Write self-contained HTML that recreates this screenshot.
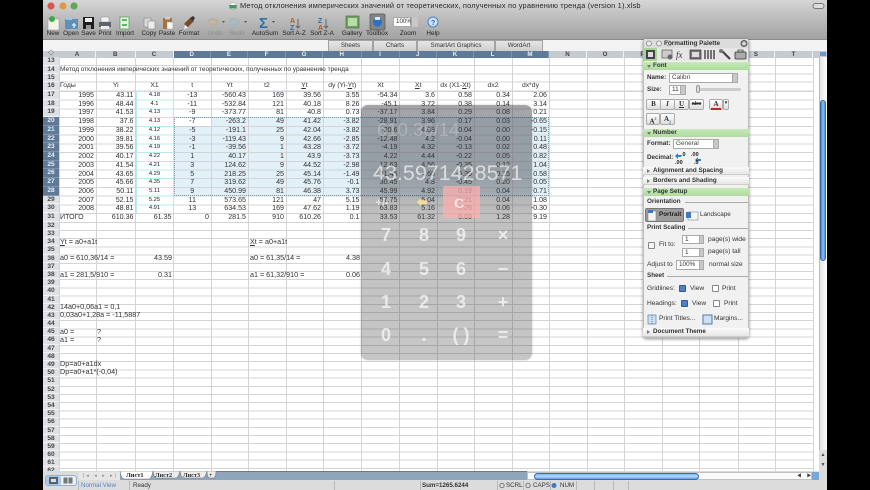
<!DOCTYPE html>
<html><head><meta charset="utf-8"><title>Excel</title>
<style>
*{box-sizing:border-box;margin:0;padding:0}
html,body{width:870px;height:490px;background:#000;overflow:hidden}
body{font-family:"Liberation Sans","Noto Sans CJK JP",sans-serif;color:#333;position:relative}
#w{position:absolute;left:43px;top:0;width:784px;height:490px;background:#fff;overflow:hidden;filter:blur(.35px)}
#p{position:absolute;left:-43px;top:0;width:870px;height:490px}
.t{position:absolute;white-space:nowrap;line-height:8px;font-size:6.6px}
.c{transform:translateX(-50%)}
.lb{font-size:6.4px;color:#222;top:30px}
.r{position:absolute;left:59px;display:grid;grid-template-columns:37px 39.5px 38px 37.5px 37px 38px 37px 38.5px 38px 37.5px 37px 38px 37px;font-size:7.1px;color:#333;line-height:8.7px;height:8.7px;white-space:nowrap}
.r i{font-style:normal;text-align:right;padding-right:2px}
.r i:nth-child(3){font-size:5.8px;text-align:center;padding:0;color:#222}
.r i:nth-child(4){text-align:center;padding:0}
.r.n i:nth-child(3){font-size:7.1px;text-align:right;padding-right:2px;color:#333}
.r.n i:nth-child(4){text-align:right;padding-right:2px}
.r.h{font-size:6.8px}
.r.h i,.r.h i:nth-child(3),.r.h i:nth-child(4){text-align:center;padding:0;font-size:6.8px}
.r.h i.l,.r i.l{text-align:left;padding-left:1px}
.ch{position:absolute;left:59px;top:50.5px;height:7px;display:grid;grid-template-columns:37px 39.5px 38px 37.5px 37px 38px 37px 38.5px 38px 37.5px 37px 38px 37px 38px 37px 38px 37px 39px 37px 38px;font-size:6.2px;line-height:7px;font-weight:bold;text-align:center}
.ch i{font-style:normal;background:#c6cbd2;color:#444;border-right:1px solid #eef0f2}
.ch i.s{background:#5e7a96;color:#e8eef4;border-right:1px solid #7c94ac}
.rh{position:absolute;left:43px;width:16px;background:#dde0e4;font-size:6.6px;text-align:center;color:#444;font-weight:bold}
.rh div{border-bottom:1px solid #f0f1f3}
.rh .s{background:#5e7a96;color:#e8eef4;border-bottom:1px solid #7c94ac}
.g{font-size:7.2px;color:#333}
.pal{position:absolute;left:643px;top:39px;width:106px;height:299px;background:#f1f1f1;border:1px solid #bcbcbc;border-radius:3px;box-shadow:0 1px 3px rgba(0,0,0,.45)}
.hd{position:absolute;left:643px;width:106px;height:8px;background:linear-gradient(#c6e9b8,#aedb9c);font-size:6.3px;font-weight:bold;line-height:8px;padding-left:10px;color:#333}
.hd.w{background:linear-gradient(#fafafa,#e6e6e6);border-bottom:1px solid #ccc}
.hd:before{content:"";position:absolute;left:4px;top:2.5px;border-left:2.5px solid transparent;border-right:2.5px solid transparent;border-top:3.5px solid #777}
.hd.w:before{border-top:2.5px solid transparent;border-bottom:2.5px solid transparent;border-left:3.5px solid #777;border-right:0;top:2px}
.f{position:absolute;background:#fff;border:1px solid #aaa;font-size:6.4px;line-height:8px;padding-left:2px;color:#333}
.btn{position:absolute;background:linear-gradient(#fff,#ddd);border:1px solid #aaa;border-radius:2px;font-size:7px;text-align:center;color:#333;font-family:"Liberation Serif",serif;font-weight:bold}
.ar{position:absolute;background:#c8c8c8;border-left:1px solid #aaa}
.sl{position:absolute;height:1px;background:#aaa}
.b6{font-weight:bold;font-size:6.3px}
.cb{position:absolute;width:7px;height:7px;background:#fff;border:1px solid #888;border-radius:1px}
.cb.on{background:#4d82c8;border-color:#35598c}
.calc{position:absolute;left:361px;top:105px;width:171px;height:255px;border-radius:7px;background:linear-gradient(rgba(52,54,60,.45) 0,rgba(52,54,60,.43) 70px,rgba(60,60,60,.32) 112px,rgba(60,60,60,.29) 100%);box-shadow:0 0 2px rgba(0,0,0,.2)}
.k{position:absolute;font-size:18px;line-height:18px;color:rgba(255,255,255,.66);transform:translateX(-50%);font-weight:bold;white-space:nowrap}
.tab{position:absolute;top:39.5px;height:11px;background:linear-gradient(#e6e6e6,#cecece);border:1px solid #a2a2a2;border-bottom:0;font-size:6.2px;text-align:center;line-height:10px;color:#333}
.d{position:absolute;top:481px;width:1px;height:9px;background:#b8b8b8}
.st{position:absolute;top:481px;font-size:6.2px;line-height:9px;color:#333;white-space:nowrap}
.q div{height:8.2px}
</style></head><body>
<div id="w"><div id="p">
<!-- toolbar -->
<div style="position:absolute;left:43px;top:0;width:784px;height:39px;background:linear-gradient(#d6d6d6,#c2c2c2 35%,#a2a2a2)"></div>
<div style="position:absolute;left:43px;top:39px;width:784px;height:12px;background:#f3f3f3;border-top:1px solid #8a8a8a"></div>
<svg style="position:absolute;left:0;top:0" width="870" height="40">
<circle cx="51" cy="6" r="3.6" fill="#d9564e"/><circle cx="63" cy="6" r="3.6" fill="#dd9a45"/><circle cx="74" cy="6" r="3.6" fill="#63a65c"/>
<circle cx="233" cy="6" r="3.6" fill="#f4f4f4" stroke="#999" stroke-width=".5"/><rect x="229.5" y="5" width="7" height="3.5" fill="#3f9a5a"/>
<rect x="813" y="3.5" width="11" height="5" rx="2.5" fill="#ddd" stroke="#777"/>
<rect x="48" y="19" width="11" height="11" fill="#f4f4ea" stroke="#999" stroke-width=".6"/><circle cx="52" cy="19" r="3" fill="#3fa84a"/>
<rect x="65" y="19" width="13" height="10" fill="#5f8fb8"/><rect x="66" y="17" width="6" height="3" fill="#a9c3d8"/><path d="M72 25h4M74 23v5" stroke="#fff"/>
<rect x="83" y="17" width="11" height="12" fill="#1e1e1e"/><rect x="85" y="18" width="7" height="4" fill="#eee"/><rect x="86" y="25" width="5" height="4" fill="#999"/>
<rect x="101" y="17" width="8" height="5" fill="#f2f2f2" stroke="#888" stroke-width=".5"/><rect x="99" y="22" width="12" height="5" fill="#5c6670"/><rect x="101" y="26" width="8" height="3" fill="#eee"/>
<rect x="120" y="17" width="9" height="12" fill="#e8f2e4" stroke="#4aa04e" stroke-width=".7"/><path d="M122 20h5M122 25h5" stroke="#35a03f" stroke-width="1.5"/>
<rect x="144" y="18" width="7" height="9" fill="#d8d8d8" stroke="#888" stroke-width=".6"/><rect x="148" y="21" width="7" height="8" fill="#ececec" stroke="#888" stroke-width=".6"/>
<rect x="163" y="18" width="9" height="11" fill="#a8703e"/><rect x="165" y="16.5" width="5" height="3" fill="#ccc"/><rect x="167" y="22" width="6" height="7" fill="#f4f4f4" stroke="#999" stroke-width=".5"/>
<path d="M184 24l6-6 4 3-6 6z" fill="#7b4a20"/><path d="M185 25l3 3-4 1z" fill="#f0f0f0"/><path d="M190 18l3-2 2 2-2 3z" fill="#333"/>
<path d="M208 22c2-4 8-4 10 0-2 4-7 4-9 2" fill="none" stroke="#c0ae90" stroke-width="2"/><path d="M229 22c2-4 8-4 10 0-2 4-7 4-9 2" fill="none" stroke="#9fb6c4" stroke-width="2"/>
<path d="M222 21l3 0-1.5 2zM244 21l3 0-1.5 2zM272 21l3 0-1.5 2z" fill="#555"/>
<text x="259" y="28" font-size="15" font-weight="bold" fill="#2f6fb0" font-family="Liberation Sans">Σ</text>
<text x="290" y="23" font-size="7" font-weight="bold" fill="#b25a20" font-family="Liberation Sans">A</text><text x="290" y="30" font-size="7" font-weight="bold" fill="#2f6fb0" font-family="Liberation Sans">Z</text><path d="M298 19v9M296 26l2 2 2-2" stroke="#666" fill="none"/>
<text x="318" y="23" font-size="7" font-weight="bold" fill="#2f6fb0" font-family="Liberation Sans">Z</text><text x="318" y="30" font-size="7" font-weight="bold" fill="#b25a20" font-family="Liberation Sans">A</text><path d="M326 19v9M324 26l2 2 2-2" stroke="#666" fill="none"/>
<rect x="346" y="16" width="13" height="12" fill="#6fa060" stroke="#4d6d44" stroke-width=".7"/><rect x="348" y="18" width="9" height="8" fill="#b8dca8"/>
<rect x="370" y="14" width="15" height="16" rx="1.5" fill="#808488" stroke="#555" stroke-width=".7"/><circle cx="377.5" cy="22" r="4.5" fill="#2f6fc0"/><rect x="375" y="17" width="5" height="3" fill="#d8e8f4"/>
<circle cx="433" cy="22" r="5" fill="#cfe0f2" stroke="#4d84c0"/><text x="431" y="25" font-size="7" font-weight="bold" fill="#2f6fb0" font-family="Liberation Sans">?</text>
</svg>
<div class="t" style="left:240px;top:2px;font-size:7.4px;color:#2a2a2a;letter-spacing:.18px">Метод отклонения имперических значений от теоретических, полученных по уравнению тренда (version 1).xlsb</div>
<div class="t c lb" style="left:53px">New</div><div class="t c lb" style="left:71px">Open</div><div class="t c lb" style="left:88.5px">Save</div><div class="t c lb" style="left:105px">Print</div><div class="t c lb" style="left:125px">Import</div><div class="t c lb" style="left:149px">Copy</div><div class="t c lb" style="left:167px">Paste</div><div class="t c lb" style="left:189px">Format</div><div class="t c lb" style="left:215px;color:#8a8a8a">Undo</div><div class="t c lb" style="left:237px;color:#8a8a8a">Redo</div><div class="t c lb" style="left:265px">AutoSum</div><div class="t c lb" style="left:294px">Sort A-Z</div><div class="t c lb" style="left:322px">Sort Z-A</div><div class="t c lb" style="left:352px">Gallery</div><div class="t c lb" style="left:377px">Toolbox</div><div class="t c lb" style="left:408px">Zoom</div><div class="t c lb" style="left:433px">Help</div>
<div class="f" style="left:393px;top:17px;width:18px;height:10px;font-size:6.2px">100%</div><div class="ar" style="left:411px;top:17px;width:7px;height:10px"></div>
<div class="tab" style="left:328px;width:45px">Sheets</div><div class="tab" style="left:373px;width:44px">Charts</div><div class="tab" style="left:417px;width:78px">SmartArt Graphics</div><div class="tab" style="left:495px;width:48px">WordArt</div>

<!-- sheet -->
<div style="position:absolute;left:173.5px;top:117.2px;width:375.5px;height:78.4px;background:#e2f0f8"></div>
<div style="position:absolute;left:173.5px;top:117.2px;width:37.5px;height:8.7px;background:#fff"></div>
<div style="position:absolute;left:59px;top:57px;width:754px;height:34px;background:linear-gradient(transparent 8px,#d3d4d8 8px,#d3d4d8 9px,transparent 9px,transparent 16.5px,#d3d4d8 16.5px,#d3d4d8 17.5px,transparent 17.5px,transparent 24.5px,#d3d4d8 24.5px,#d3d4d8 25.5px,transparent 25.5px,transparent 33.5px,#d3d4d8 33.5px)"></div>
<div style="position:absolute;left:59px;top:91px;width:754px;height:139px;background:repeating-linear-gradient(#d3d4d8 0,#d3d4d8 1px,transparent 1px,transparent 8.72px)"></div>
<div style="position:absolute;left:59px;top:230px;width:754px;height:241px;background:repeating-linear-gradient(#d3d4d8 0,#d3d4d8 1px,transparent 1px,transparent 8.2px)"></div>
<svg style="position:absolute;left:0;top:0" width="870" height="490"><path d="M59.5 57V471M96.5 57V471M135.5 57V471M173.5 57V471M211.5 57V471M248.5 57V471M286.5 57V471M323.5 57V471M361.5 57V471M399.5 57V471M437.5 57V471M474.5 57V471M512.5 57V471M549.5 57V471M587.5 57V471M624.5 57V471M662.5 57V471M699.5 57V471M738.5 57V471M775.5 57V471M813.5 57V471" stroke="#d3d4d8" stroke-width="1" fill="none"/></svg>
<div style="position:absolute;left:135.5px;top:91px;width:38px;height:122px;border-left:1px solid #b6ecf0;border-right:1px solid #b6ecf0;background:repeating-linear-gradient(#b6ecf0 0,#b6ecf0 1px,transparent 1px,transparent 8.72px)"></div>
<div style="position:absolute;left:173.5px;top:117.2px;width:375.5px;height:78.4px;border:1px dotted #7d9cb2"></div>

<div class="ch"><i>A</i><i>B</i><i>C</i><i class="s">D</i><i class="s">E</i><i class="s">F</i><i class="s">G</i><i class="s">H</i><i class="s">I</i><i class="s">J</i><i class="s">K</i><i class="s">L</i><i class="s">M</i><i>N</i><i>O</i><i>P</i><i>Q</i><i>R</i><i>S</i><i>T</i></div>
<div style="position:absolute;left:43px;top:50.5px;width:16px;height:7px;background:#c6cbd2;text-align:center;font-size:6px;line-height:7px">◇</div>
<div style="position:absolute;left:813px;top:50.5px;width:14px;height:7px;background:#c6cbd2"></div>

<div class="rh" style="top:57px;line-height:8.5px;height:34px"><div style="height:8.5px">13</div><div style="height:8.5px">14</div><div style="height:8px">15</div><div style="height:9px">16</div></div>
<div class="rh" style="top:91px;line-height:8.72px"><div style="height:8.72px">17</div><div style="height:8.72px">18</div><div style="height:8.72px">19</div><div class="s" style="height:8.72px">20</div><div class="s" style="height:8.72px">21</div><div class="s" style="height:8.72px">22</div><div class="s" style="height:8.72px">23</div><div class="s" style="height:8.72px">24</div><div class="s" style="height:8.72px">25</div><div class="s" style="height:8.72px">26</div><div class="s" style="height:8.72px">27</div><div class="s" style="height:8.72px">28</div><div style="height:8.72px">29</div><div style="height:8.72px">30</div><div style="height:8.72px">31</div><div style="height:8.3px">32</div></div>
<div class="rh q" style="top:230px;height:241px;overflow:hidden;line-height:8.2px"><div>33</div><div>34</div><div>35</div><div>36</div><div>37</div><div>38</div><div>39</div><div>40</div><div>41</div><div>42</div><div>43</div><div>44</div><div>45</div><div>46</div><div>47</div><div>48</div><div>49</div><div>50</div><div>51</div><div>52</div><div>53</div><div>54</div><div>55</div><div>56</div><div>57</div><div>58</div><div>59</div><div>60</div><div>61</div><div>62</div></div>

<div class="t" style="left:60px;top:66px;font-size:6.47px;color:#333">Метод отклонения имперических значений от теоретических, полученных по уравнению тренда</div>
<div class="r n h" style="top:82px"><i class="l">Годы</i><i>Yi</i><i>X1</i><i>t</i><i>Yt</i><i>t2</i><i><u>Y</u>t</i><i>dy (Yi-<u>Y</u>t)</i><i>Xt</i><i><u>X</u>t</i><i>dx (X1-<u>X</u>t)</i><i>dx2</i><i>dx*dy</i></div>
<div class="r" style="top:91px"><i>1995</i><i>43.11</i><i>4.18</i><i>-13</i><i>-560.43</i><i>169</i><i>39.56</i><i>3.55</i><i>-54.34</i><i>3.6</i><i>0.58</i><i>0.34</i><i>2.06</i></div>
<div class="r" style="top:99.7px"><i>1996</i><i>48.44</i><i>4.1</i><i>-11</i><i>-532.84</i><i>121</i><i>40.18</i><i>8.26</i><i>-45.1</i><i>3.72</i><i>0.38</i><i>0.14</i><i>3.14</i></div>
<div class="r" style="top:108.4px"><i>1997</i><i>41.53</i><i>4.13</i><i>-9</i><i>-373.77</i><i>81</i><i>40.8</i><i>0.73</i><i>-37.17</i><i>3.84</i><i>0.29</i><i>0.08</i><i>0.21</i></div>
<div class="r" style="top:117.2px"><i>1998</i><i>37.6</i><i>4.13</i><i>-7</i><i>-263.2</i><i>49</i><i>41.42</i><i>-3.82</i><i>-28.91</i><i>3.96</i><i>0.17</i><i>0.03</i><i>-0.65</i></div>
<div class="r" style="top:125.9px"><i>1999</i><i>38.22</i><i>4.12</i><i>-5</i><i>-191.1</i><i>25</i><i>42.04</i><i>-3.82</i><i>-20.6</i><i>4.08</i><i>0.04</i><i>0.00</i><i>-0.15</i></div>
<div class="r" style="top:134.6px"><i>2000</i><i>39.81</i><i>4.16</i><i>-3</i><i>-119.43</i><i>9</i><i>42.66</i><i>-2.85</i><i>-12.48</i><i>4.2</i><i>-0.04</i><i>0.00</i><i>0.11</i></div>
<div class="r" style="top:143.3px"><i>2001</i><i>39.56</i><i>4.19</i><i>-1</i><i>-39.56</i><i>1</i><i>43.28</i><i>-3.72</i><i>-4.19</i><i>4.32</i><i>-0.13</i><i>0.02</i><i>0.48</i></div>
<div class="r" style="top:152px"><i>2002</i><i>40.17</i><i>4.22</i><i>1</i><i>40.17</i><i>1</i><i>43.9</i><i>-3.73</i><i>4.22</i><i>4.44</i><i>-0.22</i><i>0.05</i><i>0.82</i></div>
<div class="r" style="top:160.8px"><i>2003</i><i>41.54</i><i>4.21</i><i>3</i><i>124.62</i><i>9</i><i>44.52</i><i>-2.98</i><i>12.63</i><i>4.56</i><i>-0.35</i><i>0.12</i><i>1.04</i></div>
<div class="r" style="top:169.5px"><i>2004</i><i>43.65</i><i>4.29</i><i>5</i><i>218.25</i><i>25</i><i>45.14</i><i>-1.49</i><i>21.45</i><i>4.68</i><i>-0.39</i><i>0.15</i><i>0.58</i></div>
<div class="r" style="top:178.2px"><i>2005</i><i>45.66</i><i>4.35</i><i>7</i><i>319.62</i><i>49</i><i>45.76</i><i>-0.1</i><i>30.45</i><i>4.8</i><i>-0.45</i><i>0.20</i><i>0.05</i></div>
<div class="r" style="top:186.9px"><i>2006</i><i>50.11</i><i>5.11</i><i>9</i><i>450.99</i><i>81</i><i>46.38</i><i>3.73</i><i>45.99</i><i>4.92</i><i>0.19</i><i>0.04</i><i>0.71</i></div>
<div class="r" style="top:195.6px"><i>2007</i><i>52.15</i><i>5.25</i><i>11</i><i>573.65</i><i>121</i><i>47</i><i>5.15</i><i>57.75</i><i>5.04</i><i>0.21</i><i>0.04</i><i>1.08</i></div>
<div class="r" style="top:204.4px"><i>2008</i><i>48.81</i><i>4.91</i><i>13</i><i>634.53</i><i>169</i><i>47.62</i><i>1.19</i><i>63.83</i><i>5.16</i><i>-0.25</i><i>0.06</i><i>-0.30</i></div>
<div class="r n" style="top:213.1px"><i class="l">ИТОГО</i><i>610.36</i><i>61.35</i><i>0</i><i>281.5</i><i>910</i><i>610.26</i><i>0.1</i><i>33.53</i><i>61.32</i><i>0.03</i><i>1.28</i><i>9.19</i></div>

<div class="t g" style="left:60px;top:238px"><u>Y</u>t = a0+a1t</div><div class="t g" style="left:250px;top:238px"><u>X</u>t = a0+a1t</div>
<div class="t g" style="left:60px;top:254px">a0 = 610,36/14 =</div><div class="t g" style="right:698px;top:254px">43.59</div><div class="t g" style="left:250px;top:254px">a0 = 61,35/14 =</div><div class="t g" style="right:510px;top:254px">4.38</div>
<div class="t g" style="left:60px;top:271px">a1 = 281,5/910 =</div><div class="t g" style="right:698px;top:271px">0.31</div><div class="t g" style="left:250px;top:271px">a1 = 61,32/910 =</div><div class="t g" style="right:510px;top:271px">0.06</div>
<div class="t g" style="left:60px;top:303px">14a0+0,06a1 = 0,1</div><div class="t g" style="left:60px;top:311px">0,03a0+1,28a = -11,5887</div>
<div class="t g" style="left:60px;top:328px">a0 =</div><div class="t g" style="left:97px;top:328px">?</div><div class="t g" style="left:60px;top:336px">a1 =</div><div class="t g" style="left:97px;top:336px">?</div>
<div class="t g" style="left:60px;top:360px">Dp=a0+a1dx</div><div class="t g" style="left:60px;top:368px">Dp=a0+a1*(-0,04)</div>

<!-- calculator overlay -->
<div class="calc"></div>
<div style="position:absolute;left:443px;top:186px;width:37px;height:32px;background:rgba(255,175,175,.72)"></div>
<div class="t" style="left:377px;top:120px;font-size:18.5px;line-height:20px;color:rgba(255,255,255,.25)">610.36/14</div>
<div class="t" style="left:373px;top:161px;font-size:21.5px;line-height:24px;color:rgba(255,255,255,.65)">43.5971428571</div>
<div class="k" style="left:382px;top:196px;font-size:11px;line-height:14px">+/-</div>
<div class="k" style="left:422px;top:196px;font-size:11px;line-height:14px;color:rgba(255,225,150,.9)">⬅</div>
<div class="k" style="left:459px;top:194px;font-size:14px">C</div>
<div class="k" style="left:386px;top:226px">7</div><div class="k" style="left:424px;top:226px">8</div><div class="k" style="left:461px;top:226px">9</div><div class="k" style="left:503px;top:226px">×</div>
<div class="k" style="left:386px;top:260px">4</div><div class="k" style="left:424px;top:260px">5</div><div class="k" style="left:461px;top:260px">6</div><div class="k" style="left:503px;top:260px">−</div>
<div class="k" style="left:386px;top:293px">1</div><div class="k" style="left:424px;top:293px">2</div><div class="k" style="left:461px;top:293px">3</div><div class="k" style="left:503px;top:293px">+</div>
<div class="k" style="left:386px;top:326px">0</div><div class="k" style="left:424px;top:326px">.</div><div class="k" style="left:461px;top:326px">( )</div><div class="k" style="left:503px;top:326px">=</div>

<!-- vertical scrollbar -->
<div style="position:absolute;left:819px;top:57px;width:8px;height:414px;background:linear-gradient(90deg,#e4e4e4,#fff);border-left:1px solid #bbb"></div>
<div style="position:absolute;left:820px;top:100px;width:6px;height:161px;border-radius:3px;background:linear-gradient(90deg,#3f7fd0,#8fc0f0 50%,#4f8ad8);border:1px solid #3a6db0"></div>
<div style="position:absolute;left:820px;top:52px;width:6px;height:4px;background:#6c9ad0"></div>
<div style="position:absolute;left:819px;top:450px;width:8px;height:21px;background:#ddd;font-size:5px;text-align:center;line-height:10px;color:#444">▲<br>▼</div>

<!-- palette -->
<div class="pal"></div>
<svg style="position:absolute;left:643px;top:39px" width="106" height="22">
<rect x="1" y="0" width="104" height="9" fill="#dcdcdc"/><rect x="1" y="9" width="104" height="13" fill="#e6e6e6"/>
<g fill="#ececec" stroke="#8a8a8a" stroke-width=".8"><circle cx="6" cy="4.5" r="2.5"/><circle cx="16" cy="4.5" r="2.5"/><circle cx="26" cy="4.5" r="2.5"/></g>
<circle cx="101" cy="4.5" r="2.7" fill="none" stroke="#666" stroke-width="1.6"/>
<rect x="1" y="9" width="13" height="13" fill="#a6d596"/>
<rect x="3" y="11" width="9" height="9" fill="#444"/><rect x="5" y="13" width="5" height="5" fill="#ddd"/>
<rect x="19" y="11" width="10" height="8" fill="#ccc" stroke="#555" stroke-width=".7"/><circle cx="27" cy="18" r="2.5" fill="#666"/>
<text x="33" y="19" font-size="9" font-style="italic" font-family="Liberation Serif" fill="#333">fx</text>
<rect x="47" y="11" width="11" height="9" fill="#777" stroke="#333" stroke-width=".7"/><rect x="49" y="13" width="7" height="5" fill="#ddd"/>
<path d="M62 11v9M65 11v9M68 11v9M71 11v9" stroke="#555" stroke-width="1.6"/>
<path d="M78 11l9 9" stroke="#444" stroke-width="2.2"/><circle cx="78" cy="12" r="2" fill="#777"/>
<rect x="92" y="13" width="11" height="7" rx="1" fill="#aaa" stroke="#333" stroke-width=".8"/><rect x="95" y="11" width="5" height="2" fill="none" stroke="#333" stroke-width=".7"/>
</svg>
<div class="t" style="left:664px;top:39.5px;font-size:6.4px;font-weight:bold;color:#333">Formatting Palette</div>
<div class="hd" style="top:62px">Font</div>
<div class="t b6" style="left:647px;top:74px">Name:</div><div class="f" style="left:669px;top:73px;width:69px;height:10px;color:#444">Calibri</div><div class="ar" style="left:732px;top:74px;width:5px;height:8px"></div>
<div class="t b6" style="left:647px;top:86px">Size:</div><div class="f" style="left:669px;top:85px;width:17px;height:10px">11</div><div class="ar" style="left:680px;top:86px;width:5px;height:8px"></div>
<div class="sl" style="left:697px;top:88px;width:44px;height:3px;background:#ccc;border-radius:2px"></div><div style="position:absolute;left:696px;top:85px;width:4px;height:8px;background:#ddd;border:1px solid #999;border-radius:2px"></div>
<div class="btn" style="left:646px;top:99px;width:15px;height:11px;line-height:9px">B</div><div class="btn" style="left:660px;top:99px;width:15px;height:11px;line-height:9px;font-style:italic">I</div><div class="btn" style="left:674px;top:99px;width:15px;height:11px;line-height:9px;text-decoration:underline">U</div><div class="btn" style="left:689px;top:99px;width:15px;height:11px;line-height:9px;font-size:5.5px;text-decoration:line-through;font-family:'Liberation Sans'">abc</div>
<div class="btn" style="left:709px;top:99px;width:14px;height:11px;line-height:8px">A</div><div style="position:absolute;left:711px;top:107.5px;width:10px;height:2px;background:#d02020"></div><div class="btn" style="left:723px;top:99px;width:6px;height:11px;line-height:8px;font-size:5px">▾</div>
<div class="btn" style="left:646px;top:113px;width:14px;height:12px;line-height:10px">A<sup style="font-size:4px;color:#36c">2</sup></div><div class="btn" style="left:660px;top:113px;width:15px;height:12px;line-height:10px">A<sub style="font-size:4px;color:#36c">2</sub></div>
<div class="hd" style="top:129px">Number</div>
<div class="t b6" style="left:647px;top:140px">Format:</div><div class="f" style="left:673px;top:139px;width:46px;height:10px;color:#444">General</div><div class="ar" style="left:713px;top:140px;width:5px;height:8px"></div>
<div class="t b6" style="left:647px;top:154px">Decimal:</div>
<svg style="position:absolute;left:674px;top:151px" width="28" height="14"><path d="M1 5l3-3v2h3v2H4v2z" fill="#2f7fd0"/><path d="M21 9l3 3v-2h3V8h-3V6z" fill="#2f7fd0"/><text x="7" y="5" font-size="5.5" font-weight="bold" fill="#222" font-family="Liberation Sans">.0</text><text x="1" y="13" font-size="5.5" font-weight="bold" fill="#222" font-family="Liberation Sans">.00</text><text x="17" y="5" font-size="5.5" font-weight="bold" fill="#222" font-family="Liberation Sans">.00</text><text x="20" y="13" font-size="5.5" font-weight="bold" fill="#222" font-family="Liberation Sans">.0</text></svg>
<div class="hd w" style="top:167px">Alignment and Spacing</div>
<div class="hd w" style="top:177px">Borders and Shading</div>
<div class="hd" style="top:188px">Page Setup</div>
<div class="t b6" style="left:647px;top:198px">Orientation</div><div class="sl" style="left:685px;top:202px;width:63px"></div>
<div style="position:absolute;left:645px;top:208px;width:39px;height:14px;background:#9c9c9c;border:1px solid #777;border-radius:2px"></div>
<svg style="position:absolute;left:647px;top:209px" width="54" height="13"><rect x="1" y="2" width="8" height="10" fill="#f4f4f4" stroke="#777" stroke-width=".5"/><rect x="1" y="1" width="5" height="3" fill="#3f78c0"/><rect x="41" y="3" width="10" height="8" fill="#f4f4f4" stroke="#777" stroke-width=".5"/><rect x="39" y="3" width="5" height="6" fill="#3f78c0"/></svg>
<div class="t b6" style="left:659px;top:211px;color:#222">Portrait</div><div class="t" style="left:700px;top:211px;font-size:6.3px">Landscape</div>
<div class="t b6" style="left:647px;top:224px">Print Scaling</div><div class="sl" style="left:688px;top:228px;width:60px"></div>
<div class="cb" style="left:648px;top:242px;background:#f6f6f6"></div><div class="t" style="left:659px;top:241px">Fit to:</div>
<div class="f" style="left:682px;top:235px;width:22px;height:9px;line-height:7px">1</div><div class="ar" style="left:699px;top:236px;width:4px;height:7px"></div>
<div class="f" style="left:682px;top:248px;width:22px;height:9px;line-height:7px">1</div><div class="ar" style="left:699px;top:249px;width:4px;height:7px"></div>
<div class="t" style="left:708px;top:236px">page(s) wide</div><div class="t" style="left:708px;top:248px">page(s) tall</div>
<div class="t" style="left:647px;top:261px">Adjust to</div><div class="f" style="left:676px;top:260px;width:28px;height:10px">100%</div><div class="ar" style="left:699px;top:261px;width:4px;height:8px"></div><div class="t" style="left:709px;top:261px">normal size</div>
<div class="t b6" style="left:647px;top:272px">Sheet</div><div class="sl" style="left:667px;top:276px;width:81px"></div>
<div class="t" style="left:647px;top:285px">Gridlines:</div><div class="cb on" style="left:679px;top:285px"></div><div class="t" style="left:690px;top:285px">View</div><div class="cb" style="left:712px;top:285px"></div><div class="t" style="left:722px;top:285px">Print</div>
<div class="t" style="left:647px;top:300px">Headings:</div><div class="cb on" style="left:681px;top:300px"></div><div class="t" style="left:692px;top:300px">View</div><div class="cb" style="left:713px;top:300px"></div><div class="t" style="left:724px;top:300px">Print</div>
<svg style="position:absolute;left:647px;top:314px" width="75" height="11"><rect x="1" y="1" width="8" height="9" fill="#cfe0f0" stroke="#5a7fa8" stroke-width=".7"/><path d="M5 1v9" stroke="#4a78b0" stroke-dasharray="1 1"/><rect x="56" y="1" width="9" height="9" fill="#cfe0f0" stroke="#4a78b0"/></svg>
<div class="t" style="left:659px;top:315px">Print Titles...</div><div class="t" style="left:714px;top:315px">Margins...</div>
<div class="hd w" style="top:328px;height:9px">Document Theme</div>

<!-- bottom bars -->
<div style="position:absolute;left:43px;top:471px;width:784px;height:19px;background:#dcdcdc"></div>
<div style="position:absolute;left:120px;top:471px;width:407px;height:9px;background:#8fa5bb;border-top:1px solid #777"></div>
<div style="position:absolute;left:79px;top:472px;width:41px;height:8px;background:#e6e6e6;font-size:5px;line-height:8px;color:#888;padding-left:4px;letter-spacing:2px;white-space:nowrap">|◂ ◂ ▸ ▸|</div>
<svg style="position:absolute;left:118px;top:471px" width="100" height="10"><path d="M2 0c1 6 2 8 5 8h24c2 0 3-3 4-8z" fill="#fff" stroke="#777" stroke-width=".6"/><path d="M35 0c1 6 2 7 4 7h19c2 0 3-3 4-7zM62 0c1 6 2 7 4 7h19c2 0 3-3 4-7zM89 0c0 5 1 7 3 7h3c2 0 3-3 3-7z" fill="#ececec" stroke="#777" stroke-width=".6"/></svg>
<div class="t" style="left:126px;top:472px;font-size:6.4px;font-weight:bold;font-family:'Liberation Serif','Noto Serif CJK SC',serif;color:#222">Лист1</div><div class="t" style="left:155px;top:471.5px;font-size:6.2px;font-family:'Liberation Serif','Noto Serif CJK SC',serif;font-weight:bold;color:#333">Лист2</div><div class="t" style="left:183px;top:471.5px;font-size:6.2px;font-family:'Liberation Serif','Noto Serif CJK SC',serif;font-weight:bold;color:#333">Лист3</div><div class="t" style="left:209px;top:471.5px;font-size:6px">+</div>
<div style="position:absolute;left:45px;top:475px;width:32px;height:11px;background:#eee;border:1px solid #8fb0d8;border-radius:3px"></div><div style="position:absolute;left:46px;top:476px;width:15px;height:9px;background:#a8c8ec;border-radius:2px"></div>
<svg style="position:absolute;left:49px;top:477px" width="26" height="8"><rect x=".5" y=".5" width="8" height="6" fill="#666" stroke="#333" stroke-width=".6"/><rect x="2" y="2" width="5" height="3" fill="#cfe0f0"/><rect x="14.5" y=".5" width="4" height="6" fill="#777"/><rect x="19.5" y=".5" width="4" height="6" fill="#777"/></svg>
<div style="position:absolute;left:527px;top:471.5px;width:285px;height:8.5px;background:#fafafa;border:1px solid #c0c0c0"></div>
<div style="position:absolute;left:534px;top:473px;width:165px;height:7px;border-radius:4px;background:linear-gradient(#7fb8ec,#b4d8f6 50%,#5f9ee0);border:1.5px solid #2f6cb8"></div>
<div style="position:absolute;left:797px;top:473px;width:16px;height:6px;font-size:4.5px;line-height:6px;color:#444;letter-spacing:2px;white-space:nowrap">◀ ▶</div>
<div style="position:absolute;left:812px;top:472px;width:7px;height:8px;background:#7aa6d8"></div>
<div class="st" style="left:81px;color:#4d86c8">Normal View</div><div class="st" style="left:133px">Ready</div><div class="st" style="left:422px;font-weight:bold">Sum=1265.6244</div>
<div class="st" style="left:506px">SCRL</div><div class="st" style="left:533px">CAPS</div><div class="st" style="left:560px">NUM</div>
<svg style="position:absolute;left:498px;top:482px" width="60" height="7"><circle cx="4" cy="3.5" r="2.2" fill="none" stroke="#777"/><circle cx="30" cy="3.5" r="2.2" fill="none" stroke="#777"/><circle cx="56" cy="3.5" r="2.5" fill="#3f78c8"/></svg>
<div class="d" style="left:78px"></div><div class="d" style="left:129px"></div><div class="d" style="left:334px"></div><div class="d" style="left:420px"></div><div class="d" style="left:497px"></div><div class="d" style="left:523px"></div><div class="d" style="left:550px"></div><div class="d" style="left:576px"></div><div class="d" style="left:594px"></div><div class="d" style="left:613px"></div><div class="d" style="left:628px"></div>
</div></div>
</body></html>
